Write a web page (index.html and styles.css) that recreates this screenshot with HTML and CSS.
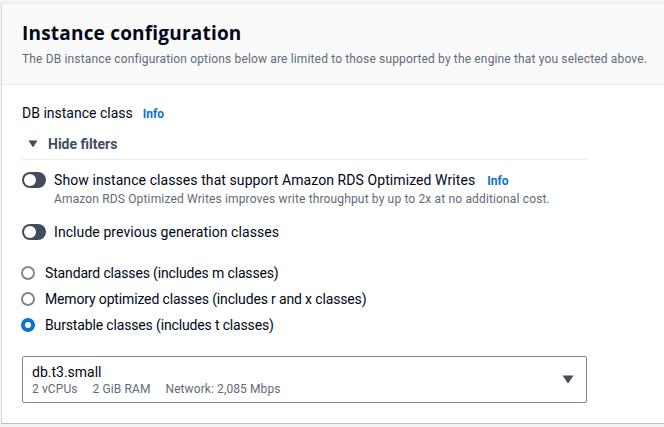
FILE: index.html
```html
<!DOCTYPE html>
<html>
<head>
<meta charset="utf-8">
<link rel="stylesheet" href="styles.css">
</head>
<body>
<div class="panel">
  <div class="header">
    <h2 class="title">Instance configuration</h2>
    <p class="desc">The DB instance configuration options below are limited to those supported by the engine that you selected above.</p>
  </div>
  <div class="body">
    <div class="label-row"><span class="label">DB instance class</span><a class="info">Info</a></div>
    <div class="filters">
      <svg class="caret-down" width="10" height="8" viewBox="0 0 10 8"><path d="M0.5 0.5h9L5 7.5z" fill="#414d5c"/></svg>
      <span>Hide filters</span>
    </div>
    <div class="toggle-row">
      <span class="toggle"><span class="knob"></span></span>
      <div class="toggle-text">
        <div class="toggle-label">Show instance classes that support Amazon RDS Optimized Writes<a class="info">Info</a></div>
        <div class="toggle-desc">Amazon RDS Optimized Writes improves write throughput by up to 2x at no additional cost.</div>
      </div>
    </div>
    <div class="toggle-row second">
      <span class="toggle"><span class="knob"></span></span>
      <div class="toggle-text">
        <div class="toggle-label">Include previous generation classes</div>
      </div>
    </div>
    <div class="radios">
      <div class="radio-row"><span class="radio"></span><span>Standard classes (includes m classes)</span></div>
      <div class="radio-row"><span class="radio"></span><span>Memory optimized classes (includes r and x classes)</span></div>
      <div class="radio-row"><span class="radio checked"></span><span>Burstable classes (includes t classes)</span></div>
    </div>
    <div class="select">
      <div class="select-text">
        <div class="select-main">db.t3.small</div>
        <div class="select-tags"><span>2 vCPUs</span><span>2 GiB RAM</span><span>Network: 2,085 Mbps</span></div>
      </div>
      <svg class="select-caret" width="12" height="9" viewBox="0 0 12 9"><path d="M0.5 0.5h11L6 8.5z" fill="#414d5c"/></svg>
    </div>
  </div>
</div>
</body>
</html>
```
FILE: styles.css
```css
html, body {
  margin: 0;
  padding: 0;
  background: #f2f3f3;
  font-family: Roboto, "Open Sans", Arial, sans-serif;
  color: #000716;
}
body {
  padding: 3px 0 0 1px;
  height: 427px;
  box-sizing: border-box;
  overflow: hidden;
}
.panel {
  background: #ffffff;
  border-top: 1px solid #e9ebed;
  border-left: 1px solid #d5dbdb;
  border-bottom: 1px solid #b6bec9;
  box-sizing: border-box;
  height: 421px;
}
.header {
  background: #fafafa;
  border-bottom: 1px solid #e9ebed;
  padding: 17px 20px 0 20px;
  height: 81px;
  box-sizing: border-box;
}
.title {
  margin: 0;
  font-family: "Open Sans", Roboto, sans-serif;
  font-size: 19px;
  font-weight: 700;
  line-height: 24px;
  letter-spacing: 0.2px;
}
.desc {
  margin: 6px 0 0 0;
  font-size: 12px;
  line-height: 16px;
  color: #5f6b7a;
  letter-spacing: 0.15px;
  white-space: nowrap;
}
.body {
  padding: 18px 20px 0 20px;
  width: 565px;
}
.label-row {
  display: flex;
  align-items: baseline;
  font-size: 14px;
  line-height: 20px;
}
.info {
  color: #0972d3;
  font-weight: 700;
  font-size: 12px;
  margin-left: 10px;
}
.filters {
  display: flex;
  align-items: center;
  gap: 10px;
  font-size: 14px;
  font-weight: 700;
  color: #414d5c;
  height: 22px;
  margin-top: 9px;
  padding-left: 6px;
  border-bottom: 1px solid #e9ebed;
  padding-bottom: 4px;
}
.toggle-row {
  display: flex;
  align-items: flex-start;
  gap: 8px;
  margin-top: 10px;
}
.toggle-row.second {
  margin-top: 15px;
}
.toggle {
  width: 24px;
  height: 16px;
  border-radius: 8px;
  background: #414d5c;
  position: relative;
  flex: none;
  margin-top: 2px;
}
.knob {
  position: absolute;
  left: 2px;
  top: 2px;
  width: 12px;
  height: 12px;
  border-radius: 50%;
  background: #ffffff;
}
.toggle-label {
  font-size: 14px;
  line-height: 20px;
  display: flex;
  align-items: baseline;
  letter-spacing: 0.08px;
}
.toggle-label .info {
  margin-left: 12px;
  letter-spacing: 0;
}
.toggle-desc {
  font-size: 12px;
  line-height: 16px;
  color: #5f6b7a;
  letter-spacing: 0.15px;
}
.radios {
  margin-top: 21px;
  display: flex;
  flex-direction: column;
  gap: 6px;
}
.radio-row {
  display: flex;
  align-items: center;
  gap: 10px;
  font-size: 14px;
  line-height: 20px;
  height: 20px;
  letter-spacing: -0.15px;
}
.radio {
  width: 10px;
  height: 10px;
  border: 2px solid #7d8998;
  border-radius: 50%;
  flex: none;
  margin-left: -1px;
}
.radio.checked {
  width: 6px;
  height: 6px;
  border: 4px solid #0972d3;
}
.select {
  margin-top: 21px;
  border: 1px solid #7d8998;
  border-radius: 2px;
  height: 47px;
  box-sizing: border-box;
  display: flex;
  align-items: center;
  justify-content: space-between;
  padding: 0 12px 0 9px;
  width: 565px;
}
.select-main {
  font-size: 14px;
  line-height: 18px;
}
.select-tags {
  font-size: 12px;
  line-height: 16px;
  color: #5f6b7a;
  display: flex;
  gap: 15px;
  letter-spacing: 0.1px;
}
```
